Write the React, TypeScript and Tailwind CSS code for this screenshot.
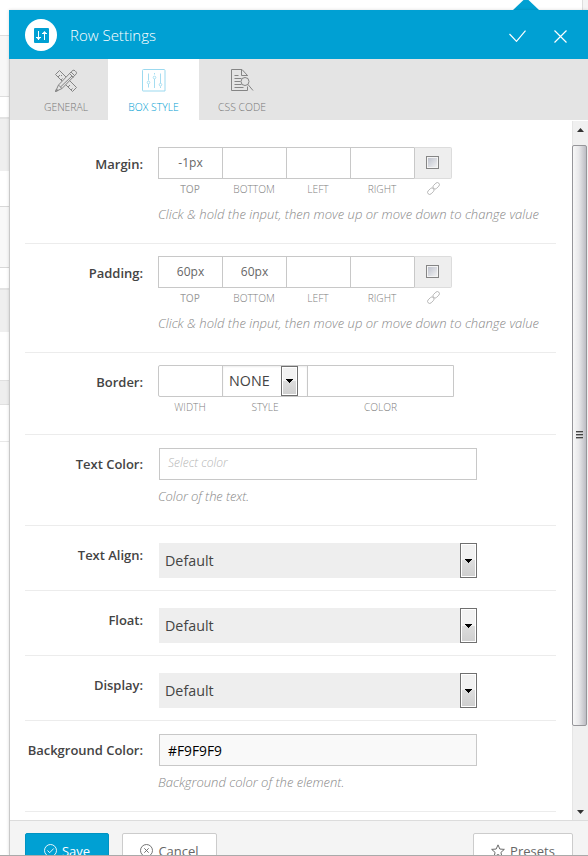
import type { ReactNode } from "react";

const strips = [
  "h-[35px] bg-white",
  "h-[62px] border-y border-[#dedede] bg-[#f7f7f7]",
  "h-5 bg-white",
  "h-[54px] border-t-2 border-[#e3e3e3] bg-[#efefef]",
  "h-[35px] bg-white",
  "h-[62px] border-y border-[#d8d8d8] bg-[#f8f8f8]",
  "h-5 bg-white",
  "h-11 border-t-2 border-[#e3e3e3] bg-[#efefef]",
  "h-12 bg-white",
  "h-[25px] border-y border-[#e0e0e0] bg-[#eeeeee]",
  "h-9 bg-white",
  "h-px bg-[#e8e8e8]",
];

function Row({ label, height, children }: { label: string; height: string; children: ReactNode }) {
  return (
    <div className={`flex shrink-0 border-b border-[#ececec] ${height}`}>
      <div className="w-[118px] shrink-0 whitespace-nowrap pt-[19px] text-right text-[13px] font-semibold leading-5 tracking-[-0.02px] text-[#444]">
        {label}
      </div>
      <div className="ml-[15px] min-w-0 flex-1">{children}</div>
    </div>
  );
}

function Hint({ text, className }: { text: string; className: string }) {
  return <p className={`whitespace-nowrap text-[13px] font-light italic leading-5 text-[#888] ${className}`}>{text}</p>;
}

function LinkIcon() {
  return (
    <svg className="h-[13px] w-[13px]" viewBox="0 0 13 13" fill="none" stroke="#aaa" strokeWidth="0.8">
      <rect x="-3.7" y="-2.1" width="7.4" height="4.2" rx="2.1" transform="translate(3.8 9.2) rotate(-45)" />
      <rect x="-3.7" y="-2.1" width="7.4" height="4.2" rx="2.1" transform="translate(9.2 3.8) rotate(-45)" />
    </svg>
  );
}

function Sides({ values }: { values: string[] }) {
  const names = ["TOP", "BOTTOM", "LEFT", "RIGHT"];
  return (
    <>
      <div className="mt-3 flex h-8">
        {values.map((v, i) => (
          <div key={i} className="flex w-16 items-center justify-center border-y border-l border-[#c8c8c8] pb-px text-[12px] text-[#666]">
            {v}
          </div>
        ))}
        <div className="flex w-[38px] items-center justify-center rounded-r-[2px] border border-[#dcdcdc] border-l-[#c8c8c8] bg-[#eee]">
          <span className="mr-0.5 mb-px h-[13px] w-[13px] border border-[#858585] bg-linear-to-br from-[#b9bdc9] to-[#f6f6f6] shadow-[inset_0_0_0_1px_#f4f4f4]" />
        </div>
      </div>
      <div className="flex h-[21px] items-center text-[10.200px] font-light text-[#808080]">
        {names.map((n, i) => (
          <span key={n} className={`w-16 text-center ${i === 0 ? "font-normal text-[#999]" : ""}`}>{n}</span>
        ))}
        <span className="flex w-[38px] justify-center pb-[3px]"><LinkIcon /></span>
      </div>
      <Hint className="mt-1 tracking-[0.035px]" text="Click & hold the input, then move up or move down to change value" />
    </>
  );
}

function Arrow({ className }: { className: string }) {
  return (
    <span className={`flex w-[17px] items-center justify-center border border-[#707070] bg-linear-to-b from-[#f2f2f2] from-50% via-[#dddddd] via-50% to-[#cfcfcf] shadow-[inset_0_0_0_1px_#fff] ${className}`}>
      <svg className="h-1 w-[7px]" viewBox="0 0 7 4" shapeRendering="crispEdges"><path d="M0 0h7v1H6v1H5v1H4v1H3V3H2V2H1V1H0z" fill="#000" /></svg>
    </span>
  );
}

function Select() {
  return (
    <div className="ml-px mt-[17px] flex h-[35px] w-[318px] items-center bg-[#eee] pl-1.5 text-[14.300px] text-[#444]">
      <span className="flex-1">Default</span>
      <Arrow className="h-[35px]" />
    </div>
  );
}

function PencilRuler() {
  return (
    <svg className="h-6 w-6" viewBox="0 0 24 24" fill="none" stroke="#858585" strokeWidth="1">
      <path d="M1.5 5.5l4-4 17 17-4 4zM4 8l2-2M7 11l1.5-1.5M14 18l2-2M17 21l1.5-1.5M7 7l1-1" />
      <path d="M17.5 2.5l1.5-1.2q1-.5 2 .5l1 1q1 1 .3 2L8 19.5l-6.5 3 3-6.5z" fill="#e4e4e4" />
      <path d="M4.5 16l3.500 3.500M15.500 4.500l4 4M17 3l4 4M18 7L6.300 18.200M1.500 22.500l1-2.500 1.500 1.500z" />
    </svg>
  );
}

function BoxStyleIcon() {
  return (
    <svg className="h-[23px] w-6" viewBox="0 0 24 23" fill="none" stroke="#9bd9ef">
      <path d="M1.500.5h20.500a1 1 0 011 1v20.500H1a.5.5 0 01-.5-.5V1.500a1 1 0 011-1z" />
      <path strokeWidth=".9" d="M6.500 4.500v7M6.500 15v3.500M12.500 10v9M12.500 4v1.500M18.500 4.500v10M18.500 17.500V19" />
      <g strokeWidth=".8"><circle cx="6.500" cy="13.500" r="1.300" /><circle cx="12.500" cy="8.500" r="1.300" /><circle cx="18.500" cy="15.700" r="1.300" /></g>
    </svg>
  );
}

function FileSearch() {
  return (
    <svg className="h-6 w-6" viewBox="0 0 24 24" fill="none" stroke="#858585">
      <path d="M17.500 7v-.5L12 .5H1.500v21h16v-4M11.500.5v6h6M4.500 6.500h4M4.500 9.500h7M4.500 12.500h6M4.500 15.500h7M4.500 18.500h9" />
      <circle cx="15" cy="12.500" r="4" fill="#e4e4e4" />
      <path d="M18 15.500l5 6" />
    </svg>
  );
}

function Tab({ icon, label, className }: { icon: ReactNode; label: string; className: string }) {
  return (
    <div className={`flex flex-col items-center text-[10.400px] font-light ${className}`}>
      <span className="mt-[9.500px] flex h-6">{icon}</span>
      <span className="mt-1.5 leading-4">{label}</span>
    </div>
  );
}

function Scrollbar() {
  return (
    <div className="mt-px flex w-4 shrink-0 flex-col items-center border-l border-[#e5e5e5] bg-[#f0f0f0]">
      <div className="flex h-6 shrink-0 items-center justify-center">
        <svg className="mb-1.5 h-1 w-[7px]" viewBox="0 0 7 4"><path d="M0 4L3.500 0 7 4z" fill="#333" /></svg>
      </div>
      <div className="-ml-px flex h-[581px] w-[15px] shrink-0 flex-col items-center justify-center gap-px self-start rounded-[2px] border border-[#96969a] bg-linear-to-r from-[#f8f8f8] via-[#e8e8ea] via-45% to-[#bcbcc3] pb-0.5">
        <i className="h-0.5 w-[7px] border-t border-[#444] bg-[#aaa]" />
        <i className="h-0.5 w-[7px] border-t border-[#444] bg-[#aaa]" />
        <i className="h-0.5 w-[7px] border-t border-[#444] bg-[#aaa]" />
      </div>
      <svg className="mt-auto mb-1.5 h-1 w-[7px]" viewBox="0 0 7 4"><path d="M0 0h7L3.500 4z" fill="#333" /></svg>
    </div>
  );
}

export default function App() {
  return (
    <div className="relative flex h-[856px] w-[588px] overflow-hidden bg-white font-['Open_Sans',sans-serif]">
      <aside className="w-[9px] shrink-0">
        {strips.map((s, i) => <div key={i} className={s} />)}
      </aside>
      <div className="flex min-w-0 flex-1 flex-col">
        <div className="flex h-2.5 shrink-0 justify-end">
          <svg className="mr-[43px] h-2.5 w-[26px]" viewBox="0 0 26 10"><path d="M0 10L10.500 0h5L26 10z" fill="#00a0d2" /></svg>
          <span className="w-[6px] border-l border-[#ddd] bg-[#f4f4f4]" />
        </div>
        <section className="flex min-h-0 flex-1 flex-col border-l border-[#c9c9c9] shadow-[0_0_3px_rgba(0,0,0,0.15)]">
          <header className="-ml-px flex h-[49px] shrink-0 items-center bg-[#00a0d3] pl-4 text-white">
            <span className="flex h-8 w-8 items-center justify-center rounded-full bg-white">
              <svg className="mt-px h-[15px] w-[15px]" viewBox="0 0 15 15">
                <rect width="15" height="15" rx="1" fill="#00a0d3" />
                <path d="M4.500 3v9M2 9.500h5M10.500 12V4M8 5.500h5" stroke="#fff" strokeWidth="1" />
                <path d="M2.300 9.500h4.400L4.500 12zM8.300 5.500h4.400L10.500 3z" fill="#fff" />
              </svg>
            </span>
            <h1 className="ml-[13px] flex-1 pt-px text-[15px] font-light">Row Settings</h1>
            <svg className="mt-0.5 mr-7 h-3 w-[17px]" viewBox="0 0 17 12" fill="none" stroke="#fff" strokeWidth="1.200"><path d="M.5 4L7.500 11.300 16.500.7" /></svg>
            <svg className="mt-[3px] mr-[21px] h-[13px] w-[13px]" viewBox="0 0 13 13" fill="none" stroke="#fff" strokeWidth="1.200"><path d="M.5.5l12 12M12.500.5l-12 12" /></svg>
          </header>
          <nav className="flex h-[61px] shrink-0 bg-[#e4e4e4] text-[#777]">
            <Tab className="w-[98px] pl-3.5" icon={<PencilRuler />} label="GENERAL" />
            <Tab className="w-[91px] bg-white text-[#00a0d3]" icon={<BoxStyleIcon />} label="BOX STYLE" />
            <Tab className="w-[86px]" icon={<FileSearch />} label="CSS CODE" />
          </nav>
          <div className="flex min-h-0 flex-1 bg-white">
            <main className="flex min-w-0 flex-1 flex-col overflow-hidden pl-[15px] pr-4 pt-[15px]">
              <Row label="Margin:" height="h-[109px]"><Sides values={["-1px", "", "", ""]} /></Row>
              <Row label="Padding:" height="h-[109px]"><Sides values={["60px", "60px", "", ""]} /></Row>
              <Row label="Border:" height="h-[82px]">
                <div className="mt-3 flex h-8 w-[296px] rounded-l-[2px] border border-[#c8c8c8]">
                  <div className="w-[63px]" />
                  <div className="flex w-[86px] items-center border-x border-[#c8c8c8] pl-1.5 text-[14.300px] text-[#444] shadow-[inset_0_1px_2px_#eee]">
                    <span className="w-[52px]">NONE</span>
                    <Arrow className="h-[30px]" />
                  </div>
                </div>
                <div className="flex h-[21px] items-center text-[10.200px] font-light text-[#808080]">
                  <span className="w-16 text-center">WIDTH</span>
                  <span className="w-[86px] text-center">STYLE</span>
                  <span className="w-[145px] text-center">COLOR</span>
                </div>
              </Row>
              <Row label="Text Color:" height="h-[91px]">
                <div className="ml-px mt-[13px] h-8 w-[318px] border border-[#c8c8c8] pl-2 text-[12px] font-light italic leading-7 tracking-[0.04px] text-[#b5b5b5]">Select color</div>
                <Hint className="mt-1.5 tracking-[-0.1px]" text="Color of the text." />
              </Row>
              <Row label="Text Align:" height="h-[65px]"><Select /></Row>
              <Row label="Float:" height="h-[65px]"><Select /></Row>
              <Row label="Display:" height="h-[65px]"><Select /></Row>
              <Row label="Background Color:" height="h-[91px]">
                <div className="ml-px mt-[13px] h-8 w-[318px] border border-[#c8c8c8] bg-[#f9f9f9] pl-2 text-[13.800px] leading-[31px] text-black">#F9F9F9</div>
                <Hint className="mt-1.5" text="Background color of the element." />
              </Row>
            </main>
            <Scrollbar />
          </div>
          <footer className="flex h-[35px] shrink-0 items-start overflow-hidden border-t border-[#dcdcdc] bg-[#f4f4f4] pl-[15px] pr-[15px] pt-3 text-[13px] text-[#666]">
            <button className="flex h-[37px] w-[84px] items-center justify-center gap-[5px] rounded-[2px] border border-[#0093c2] bg-[#00a0d3] text-white">
              <svg className="mb-0.5 h-[13px] w-[13px]" viewBox="0 0 13 13" fill="none" stroke="currentColor" strokeWidth=".9"><circle cx="6.500" cy="6.500" r="6" /><path d="M3.500 6.500l2.200 2.200 4-4.200" /></svg>
              Save
            </button>
            <button className="ml-[13px] flex h-[37px] w-[95px] items-center justify-center gap-[5px] rounded-[2px] border border-[#ccc] bg-white">
              <svg className="mb-0.5 h-[13px] w-[13px]" viewBox="0 0 13 13" fill="none" stroke="currentColor" strokeWidth=".9"><circle cx="6.500" cy="6.500" r="6" /><path d="M4.300 4.300l4.400 4.400M8.700 4.300L4.300 8.700" /></svg>
              Cancel
            </button>
            <button className="ml-auto flex h-[37px] w-[100px] items-center justify-center gap-[5px] rounded-[2px] border border-[#ccc] bg-white">
              <svg className="mb-0.5 h-3.5 w-3.5" viewBox="0 0 13 13" fill="none" stroke="currentColor" strokeWidth=".9"><path d="M6.500.8l1.700 3.900 4.200.3-3.200 2.800 1 4.200-3.700-2.300L2.800 12l1-4.200L.6 5l4.200-.3z" /></svg>
              Presets
            </button>
          </footer>
        </section>
        <div className="-ml-[9px] h-px shrink-0 bg-[#aaa]" />
      </div>
    </div>
  );
}
